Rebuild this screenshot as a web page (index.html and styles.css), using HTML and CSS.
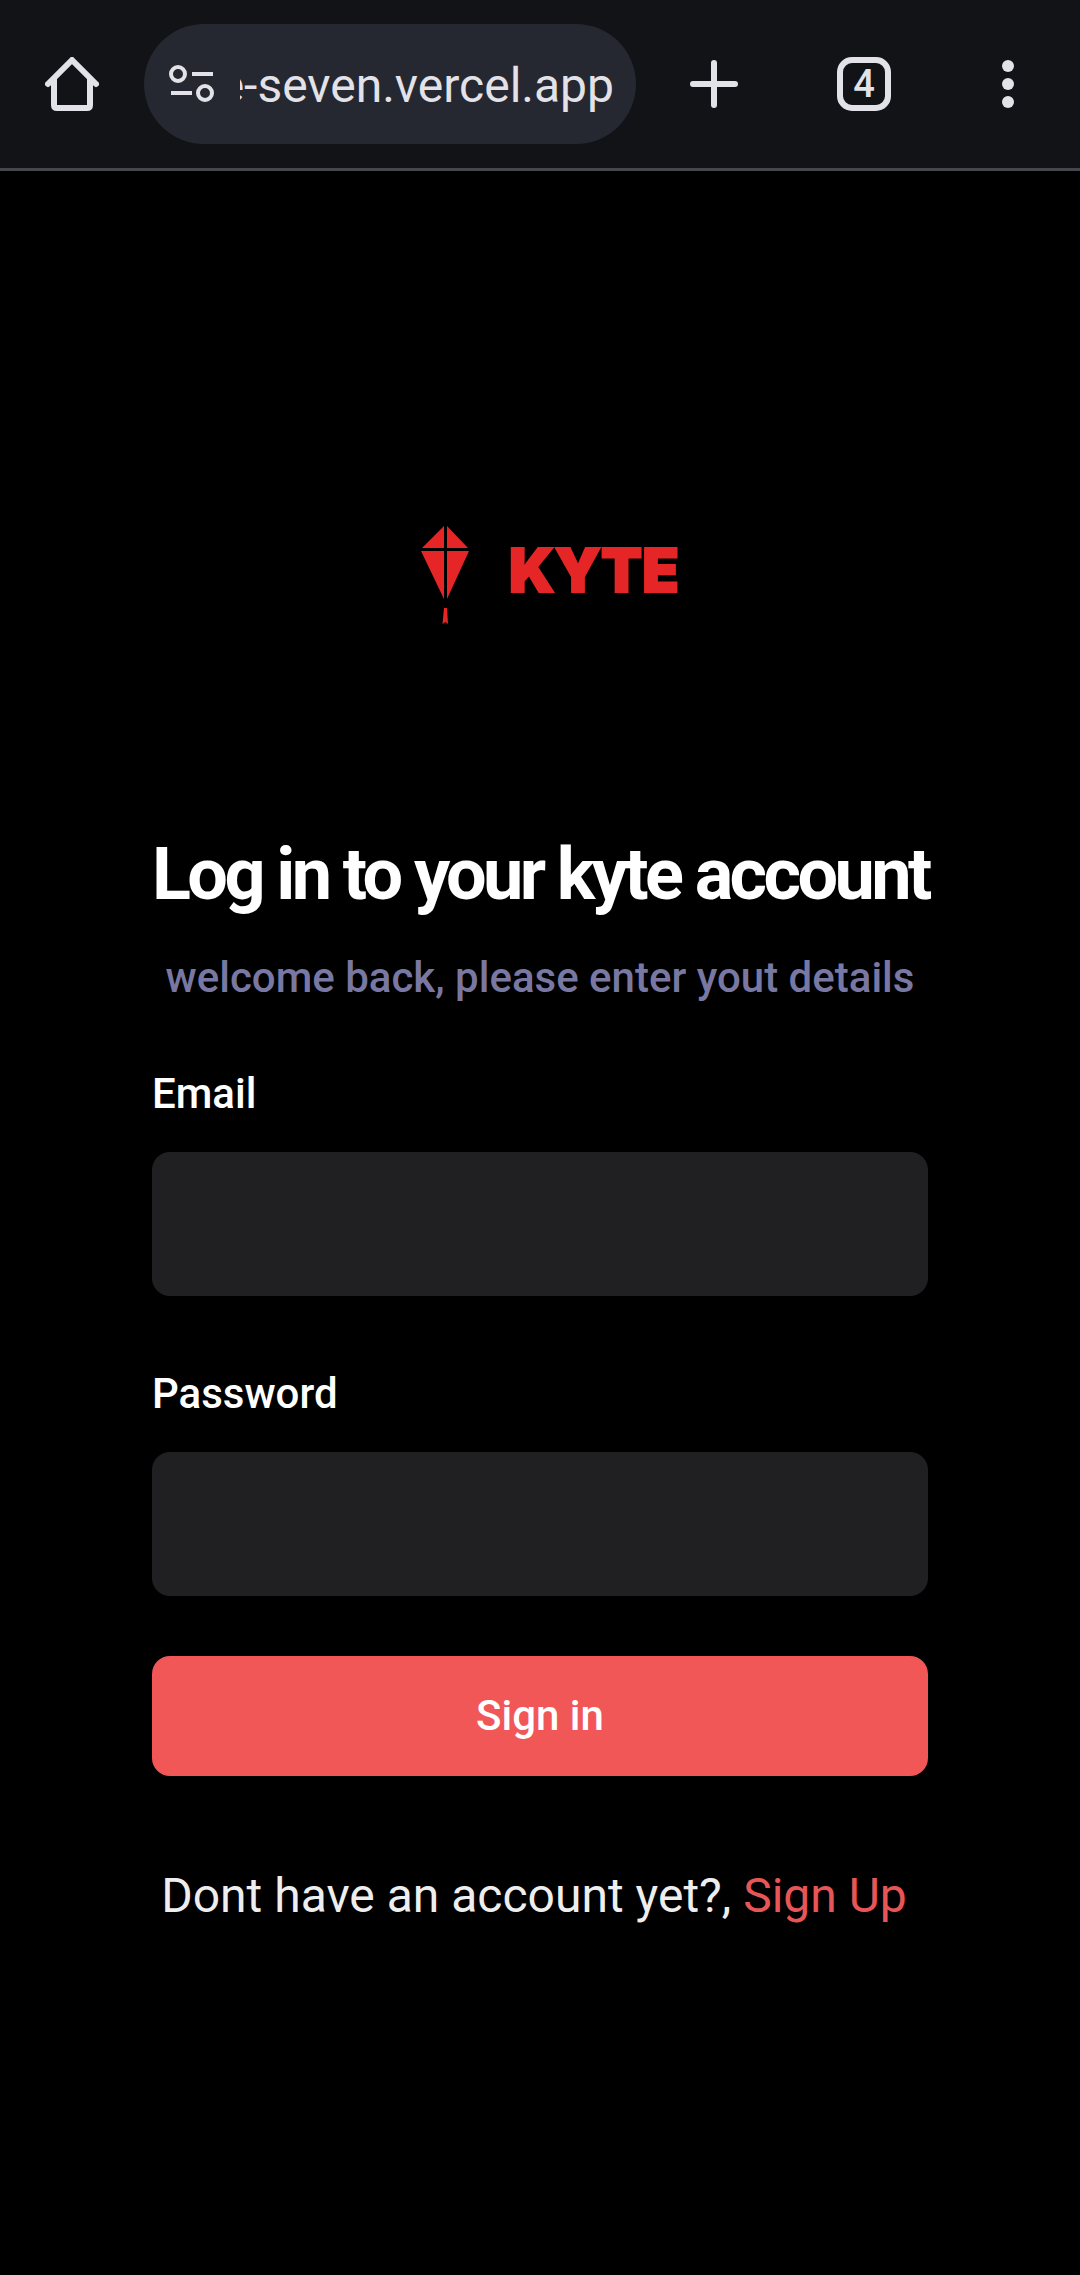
FILE: index.html
```html
<!DOCTYPE html>
<html lang="en">
<head>
<meta charset="utf-8">
<meta name="viewport" content="width=device-width, initial-scale=1">
<title>Kyte</title>
<link rel="stylesheet" href="styles.css">
</head>
<body>
<header class="toolbar">
  <button class="tool" type="button" aria-label="Home">
    <svg class="icon" viewBox="0 0 54 54"><path d="M3 27 27 3l24 24M9 22v26q0 3 3 3h30q3 0 3-3V22" fill="none" stroke="currentColor" stroke-width="6" stroke-linecap="round" stroke-linejoin="round"/></svg>
  </button>
  <div class="address">
    <svg class="site-icon" viewBox="0 0 46 38" aria-hidden="true"><g fill="none" stroke="currentColor"><circle cx="9" cy="9" r="7" stroke-width="4"/><circle cx="36" cy="28" r="7" stroke-width="4"/><path d="M23 9h21M2 28h21" stroke-width="4"/></g></svg>
    <input class="url" type="text" value="e-seven.vercel.app" aria-label="Address">
  </div>
  <button class="tool" type="button" aria-label="New tab">
    <svg class="icon" viewBox="0 0 54 54"><path d="M27 6v42M6 27h42" fill="none" stroke="currentColor" stroke-width="6" stroke-linecap="round"/></svg>
  </button>
  <button class="tool" type="button" aria-label="Open tabs"><span class="tab-count">4</span></button>
  <button class="tool" type="button" aria-label="Menu">
    <svg class="icon" viewBox="0 0 54 54" fill="currentColor"><circle cx="27" cy="9" r="6"/><circle cx="27" cy="27" r="6"/><circle cx="27" cy="45" r="6"/></svg>
  </button>
</header>
<main class="login">
  <div class="logo">
    <svg class="kite" viewBox="0 0 48 98" aria-hidden="true" fill="currentColor"><path d="M23 0v22H1zM26 0l21 22H26zM0 25h23v48zM26 25h22L26 73zM23 82h3l1 16-2.500-2-3 2z"/></svg>
    <span class="wordmark">KYTE</span>
  </div>
  <h1 class="title">Log in to your kyte account</h1>
  <p class="subtitle">welcome back, please enter yout details</p>
  <form class="form">
    <div class="field">
      <label for="email">Email</label>
      <input class="box" id="email" type="email">
    </div>
    <div class="field">
      <label for="password">Password</label>
      <input class="box" id="password" type="password">
    </div>
    <button class="submit" type="button">Sign in</button>
  </form>
  <p class="signup">Dont have an account yet?, <a href="#">Sign Up</a></p>
</main>
</body>
</html>
```
FILE: styles.css
```css
* {
  box-sizing: border-box;
}

body {
  margin: 0;
  min-height: 100vh;
  background: #000;
  color: #fff;
  font-family: Roboto, "Liberation Sans", sans-serif;
}

button,
input {
  border: 0;
  padding: 0;
  font: inherit;
}

.toolbar {
  display: grid;
  grid-template-columns: 144px minmax(0, 1fr) 156px 144px 144px;
  padding: 24px 0;
  background: #121317;
  border-bottom: 3px solid #45464e;
  color: #e3e2e8;
}

.tool {
  display: flex;
  align-items: center;
  justify-content: center;
  background: none;
  color: inherit;
}

.icon {
  width: 54px;
  height: 54px;
}

.address {
  display: flex;
  align-items: center;
  gap: 25px;
  height: 120px;
  padding: 0 22px 0 25px;
  border-radius: 60px;
  background: #252830;
}

.site-icon {
  flex: none;
  width: 46px;
  height: 38px;
}

.url {
  flex: 1;
  min-width: 0;
  height: 72px;
  padding-top: 2px;
  background: none;
  color: inherit;
  font-size: 48px;
  direction: rtl;
}

.tab-count {
  display: flex;
  align-items: center;
  justify-content: center;
  width: 54px;
  height: 54px;
  border: 6px solid currentColor;
  border-radius: 15px;
  font-size: 38px;
  line-height: 42px;
  font-weight: 500;
}

.login {
  display: flex;
  flex-direction: column;
  max-width: 776px;
  margin: 0 auto;
  padding: 355px 0 72px;
}

.logo {
  display: flex;
  justify-content: center;
  gap: 40px;
  margin-bottom: 203px;
  padding-left: 20px;
  color: #e62626;
}

.kite {
  width: 48px;
  height: 98px;
}

.wordmark {
  font-family: Inter, Roboto, sans-serif;
  font-size: 60px;
  line-height: 88px;
  font-weight: 900;
  -webkit-text-stroke: 2px currentColor;
}

.title {
  margin: 0;
  font-size: 72px;
  line-height: 96px;
  font-weight: 700;
  letter-spacing: -0.05em;
  text-align: center;
  white-space: nowrap;
}

.subtitle {
  margin: 25px 0 56px;
  color: #7878a3;
  font-size: 42px;
  line-height: 60px;
  font-weight: 500;
  text-align: center;
}

.form {
  display: flex;
  flex-direction: column;
  font-size: 42px;
  line-height: 60px;
  font-weight: 500;
}

.field {
  display: flex;
  flex-direction: column;
  gap: 28px;
  margin-bottom: 68px;
}

.field:nth-child(2) {
  margin-bottom: 60px;
}

.box {
  width: 100%;
  height: 144px;
  padding: 0 36px;
  border-radius: 18px;
  background: #202022;
  color: #fff;
}

.submit {
  height: 120px;
  border-radius: 18px;
  background: #f15757;
  color: #fff;
}

.signup {
  margin: 84px 0 0;
  padding-right: 12px;
  color: #eee;
  font-size: 48px;
  line-height: 72px;
  text-align: center;
}

.signup a {
  color: #e65656;
  text-decoration: none;
}
```
